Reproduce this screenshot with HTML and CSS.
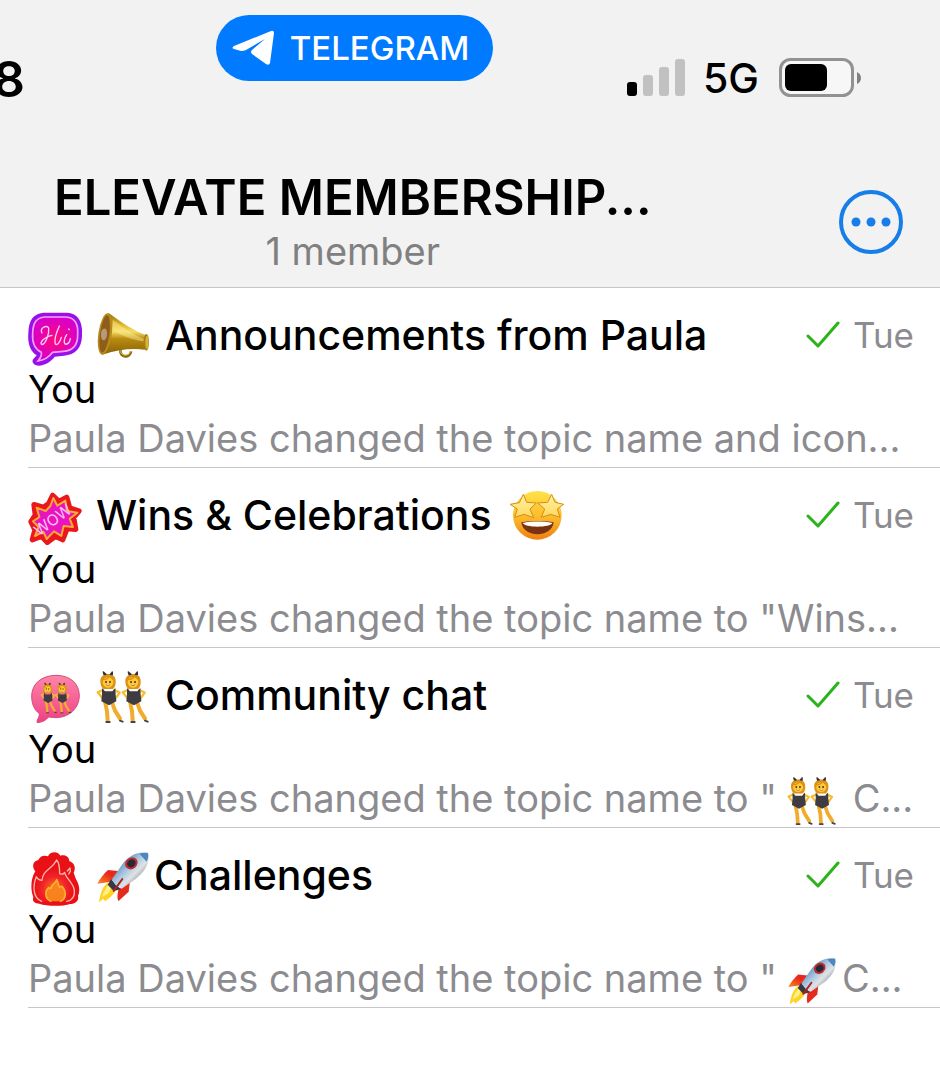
FILE: index.html
```html
<!DOCTYPE html>
<html lang="en">
<head>
    <meta charset="UTF-8">
    <meta name="viewport" content="width=device-width, initial-scale=1.0">
    <title>Elevate Membership</title>
    <link rel="stylesheet" href="styles.css">
</head>
<body>
    <!-- Shared icons -->
    <svg class="icon-defs" aria-hidden="true">
        <defs>
            <linearGradient id="gold" x1="0" y1="0" x2="0" y2="1">
                <stop offset="0" stop-color="#8f6a08"/>
                <stop offset=".3" stop-color="#e3bd35"/>
                <stop offset=".45" stop-color="#f5dc68"/>
                <stop offset=".62" stop-color="#b88b10"/>
                <stop offset="1" stop-color="#8a6208"/>
            </linearGradient>
            <radialGradient id="hi-fill">
                <stop offset="0" stop-color="#ff0a78"/>
                <stop offset="1" stop-color="#d800c8"/>
            </radialGradient>
            <linearGradient id="face" x1="0" y1="0" x2="0" y2="1">
                <stop offset="0" stop-color="#ffe34a"/>
                <stop offset=".55" stop-color="#fdb92b"/>
                <stop offset="1" stop-color="#ee7f10"/>
            </linearGradient>
            <linearGradient id="star" x1="0" y1="0" x2="0" y2="1">
                <stop offset="0" stop-color="#fff3a8"/>
                <stop offset="1" stop-color="#ffd95c"/>
            </linearGradient>
            <linearGradient id="pink" x1="0" y1="0" x2="0" y2="1">
                <stop offset="0" stop-color="#ff86a8"/>
                <stop offset="1" stop-color="#ee3f84"/>
            </linearGradient>
            <linearGradient id="hull" x1="0" y1="0" x2="1" y2="1">
                <stop offset=".2" stop-color="#4f86b8"/>
                <stop offset=".45" stop-color="#a9c8e2"/>
                <stop offset=".6" stop-color="#dfe3e6"/>
                <stop offset=".8" stop-color="#8a8f96"/>
            </linearGradient>
            <linearGradient id="fin" x1="0" y1="1" x2="1" y2="0">
                <stop offset="0" stop-color="#ff8a1c"/>
                <stop offset=".6" stop-color="#e8281c"/>
            </linearGradient>
            <radialGradient id="fire-fill" cy=".7">
                <stop offset="0" stop-color="#ff7a1a"/>
                <stop offset=".6" stop-color="#f0242a"/>
                <stop offset="1" stop-color="#ea0f16"/>
            </radialGradient>
        </defs>

        <symbol id="hi-bubble" viewBox="24 36 162 162">
            <path d="M70 38H142C174 40 188 66 186 102C187 142 168 164 132 167L104 170C94 184 76 196 56 197C40 196 32 184 42 175L50 166C28 152 23 126 25 100C26 62 38 42 70 38Z" fill="#9a10e8"/>
            <path d="M74 51H138C164 53 175 72 173 102C174 136 158 152 130 154L98 157C88 170 74 181 54 183C62 173 66 165 64 157C42 146 36 126 38 100C39 66 50 54 74 51Z" fill="url(#hi-fill)" stroke="#f6a2ff" stroke-width="5"/>
            <path d="M66 99C58 84 80 73 86 84C88 100 78 132 66 134C57 130 70 112 96 106M118 78C108 100 102 120 106 132C112 138 120 126 124 112M140 104C132 116 130 130 137 133C145 132 150 123 151 116M146 87L148 89" fill="none" stroke="#ffd0ff" stroke-width="4" stroke-linecap="round"/>
        </symbol>

        <symbol id="megaphone" viewBox="231 21 162 162">
            <path d="M304 143C302 170 334 168 336 148" fill="none" stroke="#8a6510" stroke-width="8"/>
            <path d="M303 144C304 164 332 164 334 148" fill="none" stroke="#e0bb42" stroke-width="3"/>
            <path d="M269 33C304 58 346 88 378 98C386 108 387 132 377 143C340 138 292 143 250 158Z" fill="url(#gold)"/>
            <ellipse cx="382" cy="121" rx="8" ry="25" fill="#a67c14"/>
            <ellipse cx="384" cy="121" rx="5" ry="20" fill="#d9b238"/>
            <ellipse cx="258" cy="96" rx="20" ry="63" transform="rotate(8 258 96)" fill="#b88a1c"/>
            <ellipse cx="257" cy="96" rx="14" ry="56" transform="rotate(8 257 96)" fill="#8f5d1a"/>
            <path d="M247 88C256 70 268 82 263 104C256 124 242 116 247 88Z" fill="#b99a78"/>
            <path d="M282 54C318 82 350 102 374 110L374 118C340 114 308 101 280 84Z" fill="#fff09a" opacity=".45"/>
        </symbol>

        <symbol id="wow" viewBox="24 36 162 162">
            <path d="M98 46L117 64L140 52L149 84L177 93L161 112L167 148L141 146L128 179L106 169L82 187L65 169L37 179L45 150L33 125L46 105L42 74L70 82L86 71Z" fill="#e8181c" stroke="#e8181c" stroke-width="16" stroke-linejoin="round"/>
            <path d="M100 54L112 77L136 62L141 93L172 98L149 116L159 141L131 138L124 168L102 154L80 177L70 155L45 168L56 141L39 124L58 111L50 83L77 93L91 78Z" fill="#e914bd" stroke="#ffab32" stroke-width="6" stroke-linejoin="round"/>
            <text class="wow-text" x="98" y="136" transform="rotate(-36 98 119)">WOW</text>
        </symbol>

        <symbol id="star-struck" viewBox="28 21 162 162">
            <circle cx="110" cy="100" r="73" fill="url(#face)"/>
            <path d="M62 121C90 116 132 116 159 121C154 169 67 169 62 121Z" fill="#7a3310"/>
            <path d="M66 123C94 117 130 118 155 123C151 137 72 138 66 123Z" fill="#fffdf4"/>
            <path d="M68 37L78 61L107 63L88 81L99 107L70 97L42 106L50 81L28 67L56 62Z" fill="url(#star)" stroke="#d98b14" stroke-width="3" stroke-linejoin="round"/>
            <path d="M153 37L163 61L189 67L170 81L178 106L150 97L122 106L132 81L111 63L141 61Z" fill="url(#star)" stroke="#d98b14" stroke-width="3" stroke-linejoin="round"/>
        </symbol>

        <symbol id="dancer" viewBox="231 21 90 162">
            <path d="M258 118L264 148L266 176M278 118L288 146L303 170" fill="none" stroke="#f0ac2a" stroke-width="12" stroke-linecap="round" stroke-linejoin="round"/>
            <path d="M262 180H272M303 176L311 179" stroke="#4b4148" stroke-width="6" stroke-linecap="round"/>
            <path d="M252 84L236 91L250 108M286 84L302 92L290 109" fill="none" stroke="#f7bd2e" stroke-width="7" stroke-linecap="round" stroke-linejoin="round"/>
            <path d="M249 78L258 88H280L289 78L290 98L292 118L270 130L247 118L249 98Z" fill="#3e3b42"/>
            <path d="M244 56C244 30 290 28 290 56C291 70 286 79 280 81H254C246 76 244 66 244 56Z" fill="#dc9216"/>
            <circle cx="267" cy="61" r="16" fill="#ffca35"/>
            <path d="M252 53C264 53 269 47 273 41C277 49 282 50 284 53" fill="none" stroke="#dc9216" stroke-width="4"/>
            <path d="M255 38L253 30L261 37ZM274 37L280 30L280 38Z" fill="#383238" stroke="#383238" stroke-width="4" stroke-linejoin="round"/>
            <circle cx="261" cy="60" r="3" fill="#513019"/>
            <circle cx="273" cy="60" r="3" fill="#513019"/>
            <path d="M261 68Q267 75 273 68" fill="#fff" stroke="#a63b20" stroke-width="2"/>
        </symbol>

        <symbol id="dancers" viewBox="231 21 162 162">
            <use href="#dancer" x="231" y="21" width="90" height="162"/>
            <use href="#dancer" x="306" y="21" width="90" height="162"/>
        </symbol>

        <symbol id="dancers-bubble" viewBox="24 36 162 162">
            <path d="M108 46C152 46 178 72 178 108C177 146 147 172 108 173L86 171C78 181 66 187 52 188C48 181 58 175 58 161C42 149 35 131 35 108C36 70 65 47 108 46Z" fill="url(#pink)" stroke="#d84c7d" stroke-width="3"/>
            <use href="#dancer" x="61" y="63" width="54" height="98"/>
            <use href="#dancer" x="104" y="63" width="54" height="98"/>
        </symbol>

        <symbol id="fire" viewBox="24 36 162 162">
            <path d="M46 94C34 80 39 62 55 60C60 48 72 44 84 49C90 33 114 33 121 47C137 43 148 52 148 64C162 67 169 83 161 98L168 118C178 134 181 153 174 168C178 181 166 192 151 192C126 200 80 199 58 191C43 191 36 182 40 171C31 149 32 115 46 94Z" fill="#e91016"/>
            <path d="M65 184C38 174 38 137 49 110C53 118 58 121 66 121C68 89 96 89 110 60C119 70 119 84 119 101C127 104 132 101 134 97C135 113 160 127 163 151C165 170 155 181 140 184Z" fill="url(#fire-fill)"/>
            <path d="M65 184C38 174 38 137 49 110C53 118 58 121 66 121C68 89 96 89 110 60C119 70 119 84 119 101C127 104 132 101 134 97C135 113 160 127 163 151C165 170 155 181 140 184M142 93L150 84L151 94L146 102" fill="none" stroke="#ffb8ac" stroke-width="4" stroke-linecap="round" stroke-linejoin="round"/>
            <path d="M92 184C72 174 76 151 86 143L92 146C95 131 107 130 110 119C116 128 114 137 119 141L126 139C142 156 137 178 122 184" fill="#f8831e" stroke="#ffb02c" stroke-width="5" stroke-linecap="round" stroke-linejoin="round"/>
        </symbol>

        <symbol id="rocket" viewBox="231 21 162 162">
            <path d="M305 88L267 84C254 96 243 110 235 125L276 119Z" fill="url(#fin)"/>
            <path d="M333 116L329 149L298 178C294 168 295 156 298 143Z" fill="#e52a1c"/>
            <path d="M267 122C252 130 243 154 240 181L253 170L258 178C270 169 284 159 291 144Z" fill="#ffd326"/>
            <path d="M268 130C260 140 252 152 250 165L270 152L276 136Z" fill="#fff187"/>
            <path d="M276 112L306 142L284 147L266 128Z" fill="#343945"/>
            <path d="M387 33C360 26 328 40 309 68L279 111C284 125 293 135 308 140L350 111C379 89 394 61 387 33Z" fill="url(#hull)"/>
            <path d="M387 33C379 31 370 32 361 35L383 59C388 49 389 41 387 33Z" fill="#4d87bd"/>
            <path d="M310 111L284 147" stroke="#b02020" stroke-width="6" stroke-linecap="round"/>
            <ellipse cx="337" cy="64" rx="20" ry="17" transform="rotate(-40 337 64)" fill="#c42932"/>
            <ellipse cx="337" cy="64" rx="13" ry="11" transform="rotate(-40 337 64)" fill="#252a35"/>
        </symbol>

        <symbol id="check" viewBox="0 0 34 28">
            <path d="M2 15L12 25L32 2" fill="none" stroke="#2bb31a" stroke-width="3" stroke-linecap="round" stroke-linejoin="round"/>
        </symbol>
    </svg>

    <header class="header">
        <!-- Status bar -->
        <div class="status-bar">
            <span class="clock">8</span>
            <button class="app-pill" type="button">
                <svg class="plane" viewBox="0 0 42 36" aria-hidden="true">
                    <path d="M2 16L39 1Q42 0 42 3L38 33Q37 36 34 34L20 24Q18 22 20 20L33 9L14 20Q12 21 9 21L2 19Q-1 18 2 16Z" fill="#fff"/>
                </svg>
                TELEGRAM
            </button>
            <div class="phone-status">
                <svg class="signal" viewBox="0 0 58 38" aria-hidden="true">
                    <rect x="0" y="23" width="10" height="14" rx="3" fill="#000"/>
                    <rect x="16" y="16" width="10" height="21" rx="3" fill="#c1c1c1"/>
                    <rect x="32" y="8" width="10" height="29" rx="3" fill="#c1c1c1"/>
                    <rect x="48" y="0" width="10" height="37" rx="3" fill="#c1c1c1"/>
                </svg>
                <span class="network">5G</span>
                <svg class="battery" viewBox="0 0 82 40" aria-hidden="true">
                    <rect x="1.5" y="1.5" width="72" height="36" rx="10" fill="#f7f7f7" stroke="#929292" stroke-width="3"/>
                    <rect x="6" y="6" width="42" height="27" rx="6" fill="#000"/>
                    <path d="M78 14Q82 16 82 20T78 26Z" fill="#808080"/>
                </svg>
            </div>
        </div>

        <!-- Group title -->
        <div class="nav-bar">
            <div class="group-info">
                <h1>ELEVATE MEMBERSHIP...</h1>
                <p>1 member</p>
            </div>
            <button class="more-button" type="button" aria-label="More">
                <svg viewBox="0 0 64 64" aria-hidden="true">
                    <circle cx="32" cy="32" r="30" fill="none" stroke="#177de8" stroke-width="4"/>
                    <circle cx="17" cy="32" r="4.5" fill="#177de8"/>
                    <circle cx="32" cy="32" r="4.5" fill="#177de8"/>
                    <circle cx="47" cy="32" r="4.5" fill="#177de8"/>
                </svg>
            </button>
        </div>
    </header>

    <!-- Topics -->
    <main class="topics">
        <article class="topic">
            <div class="topic-head">
                <svg class="topic-icon"><use href="#hi-bubble"/></svg>
                <h2><svg class="emoji"><use href="#megaphone"/></svg> Announcements from Paula</h2>
                <svg class="check"><use href="#check"/></svg>
                <time>Tue</time>
            </div>
            <p class="sender">You</p>
            <p class="preview">Paula Davies changed the topic name and icon...</p>
        </article>

        <article class="topic">
            <div class="topic-head">
                <svg class="topic-icon"><use href="#wow"/></svg>
                <h2>Wins &amp; Celebrations <svg class="emoji emoji-end"><use href="#star-struck"/></svg></h2>
                <svg class="check"><use href="#check"/></svg>
                <time>Tue</time>
            </div>
            <p class="sender">You</p>
            <p class="preview">Paula Davies changed the topic name to "Wins...</p>
        </article>

        <article class="topic">
            <div class="topic-head">
                <svg class="topic-icon"><use href="#dancers-bubble"/></svg>
                <h2><svg class="emoji"><use href="#dancers"/></svg> Community chat</h2>
                <svg class="check"><use href="#check"/></svg>
                <time>Tue</time>
            </div>
            <p class="sender">You</p>
            <p class="preview">Paula Davies changed the topic name to "<svg class="emoji"><use href="#dancers"/></svg> C...</p>
        </article>

        <article class="topic">
            <div class="topic-head">
                <svg class="topic-icon"><use href="#fire"/></svg>
                <h2><svg class="emoji"><use href="#rocket"/></svg>Challenges</h2>
                <svg class="check"><use href="#check"/></svg>
                <time>Tue</time>
            </div>
            <p class="sender">You</p>
            <p class="preview">Paula Davies changed the topic name to "<svg class="emoji"><use href="#rocket"/></svg>C...</p>
        </article>
    </main>
</body>
</html>
```
FILE: styles.css
```css
/* Color Palette */
:root {
    --header-bg: #f2f2f2;
    --line-color: #c6c6c8;
    --accent-blue: #007aff;
    --muted-text: #8c8c90;
}

* {
    box-sizing: border-box;
}

body {
    margin: 0;
    background-color: #fff;
    color: #000;
    font-family: Inter, sans-serif;
    overflow-x: hidden;
}

h1, h2, p {
    margin: 0;
}

button {
    border: none;
    cursor: pointer;
    font-family: inherit;
}

svg {
    flex: none;
}

.icon-defs {
    position: absolute;
    width: 0;
    height: 0;
}

.wow-text {
    font-family: Inter, sans-serif;
    font-size: 46px;
    text-anchor: middle;
    fill: #ffc4ff;
}

/* Header */
.header {
    background-color: var(--header-bg);
    border-bottom: 1px solid var(--line-color);
    padding-bottom: 12px;
}

/* Status bar */
.status-bar {
    display: flex;
    align-items: flex-start;
    padding: 15px 79px 0 0;
    height: 168px;
}

.clock {
    width: 25px;
    margin-top: 34px;
    display: flex;
    justify-content: flex-end;
    font-size: 50px;
    line-height: 60px;
    font-weight: 600;
}

.app-pill {
    display: flex;
    align-items: center;
    justify-content: center;
    gap: 16px;
    width: 277px;
    height: 66px;
    margin-left: 191px;
    padding: 0 8px 0 0;
    border-radius: 33px;
    background-color: var(--accent-blue);
    color: #fff;
    font-size: 33px;
    font-weight: 500;
}

.plane {
    width: 42px;
    height: 36px;
}

.phone-status {
    display: flex;
    align-items: center;
    margin: 34px 0 0 auto;
    height: 58px;
}

.signal {
    width: 58px;
    height: 38px;
}

.network {
    margin: 0 20px 0 18px;
    font-size: 41px;
    font-weight: 500;
}

.battery {
    width: 82px;
    height: 40px;
}

/* Group title */
.nav-bar {
    display: flex;
    align-items: center;
    justify-content: space-between;
    padding: 0 37px 0 54px;
}

.group-info {
    text-align: center;
}

.group-info h1 {
    font-size: 49px;
    line-height: 59px;
    font-weight: 600;
}

.group-info p {
    color: #808080;
    font-size: 38px;
    line-height: 48px;
}

.more-button {
    width: 64px;
    height: 64px;
    padding: 0;
    background: none;
}

.more-button svg {
    display: block;
}

/* Topics */
.topics {
    padding-left: 28px;
}

.topic {
    padding: 22px 26px 4px 0;
    border-bottom: 1px solid var(--line-color);
}

.topic-head {
    display: flex;
    align-items: center;
    height: 49px;
}

.topic-icon {
    width: 54px;
    height: 54px;
    margin: 8px 14px 0 0;
}

.topic h2 {
    flex: 1;
    font-size: 41px;
    line-height: 48px;
    font-weight: 500;
    white-space: nowrap;
}

.emoji {
    width: 54px;
    height: 54px;
    margin: -8px 4px -8px 0;
    vertical-align: -5px;
}

.emoji-end {
    margin-left: 8px;
}

.check {
    width: 34px;
    height: 28px;
    margin-right: 13px;
}

.topic time {
    color: var(--muted-text);
    font-size: 35px;
}

.sender {
    padding-top: 6px;
    font-size: 38px;
    line-height: 48px;
}

.preview {
    color: var(--muted-text);
    font-size: 38px;
    line-height: 50px;
    white-space: nowrap;
}

.preview .emoji {
    width: 50px;
    height: 50px;
    margin: -8px 5px -8px 10px;
}
```
